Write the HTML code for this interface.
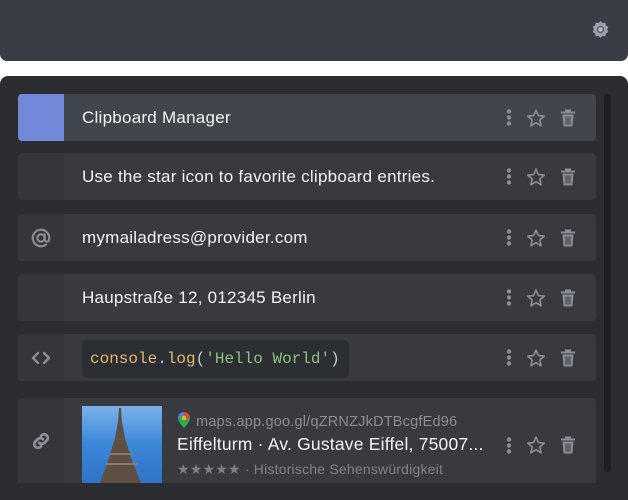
<!DOCTYPE html>
<html><head><style>
*{margin:0;padding:0;box-sizing:border-box}
body{width:628px;height:500px;background:#fff;font-family:"Liberation Sans",sans-serif;overflow:hidden;position:relative}
.top{position:absolute;left:0;top:0;width:628px;height:61px;background:#3a3d45;border-radius:0 0 7px 7px}
.panel{position:absolute;left:0;top:76px;width:628px;height:424px;background:#2b2d31;border-radius:8px 8px 0 0}
.row{position:absolute;left:18px;width:578px;height:47px;background:#383a40;border-radius:4px;overflow:hidden}
.row .ic{position:absolute;left:0;top:0;width:46px;height:100%;background:#34363c;display:flex;align-items:center;justify-content:center;color:#8a8d93}
.row .t{position:absolute;left:64px;top:0;height:47px;line-height:47px;color:#f2f3f5;font-size:17px;letter-spacing:0.25px}
.acts{position:absolute;right:20px;top:50%;transform:translateY(-50%);display:flex;align-items:center;gap:14px}
.sb{position:absolute;left:604px;top:94px;width:7px;height:378px;background:#1e1f22;border-radius:3px}
</style></head><body>
<div class="top">
<svg style="position:absolute;left:591px;top:20px" width="19" height="19" viewBox="0 0 20 20"><path fill="#9aa3ad" d="M10 1l2 2.2 3-.4.6 2.9 2.6 1.5-1.2 2.8 1.2 2.8-2.6 1.5-.6 2.9-3-.4L10 19l-2-2.2-3 .4-.6-2.9L1.8 12.8 3 10 1.8 7.2l2.6-1.5.6-2.9 3 .4z"/><circle cx="10" cy="10" r="4" fill="#5d6670"/><circle cx="10" cy="10" r="2.3" fill="#b8c0c8"/></svg>
</div>
<div class="panel"></div>
<div class="sb"></div>

<div class="row" style="top:94px;background:#41454c"><div class="ic" style="background:#7289da"></div><div class="t">Clipboard Manager</div><div class="acts"></div></div>
<div class="row" style="top:153px"><div class="ic"></div><div class="t">Use the star icon to favorite clipboard entries.</div><div class="acts"></div></div>
<div class="row" style="top:214px"><div class="ic"><svg width="22" height="22" viewBox="0 0 24 24" fill="none" stroke="#8a8d93" stroke-width="2.4" stroke-linecap="round"><circle cx="12" cy="12" r="4"/><path d="M16 8v5.5a2.5 2.5 0 0 0 5 0V12a9 9 0 1 0-3.5 7.1"/></svg></div><div class="t">mymailadress@provider.com</div><div class="acts"></div></div>
<div class="row" style="top:274px"><div class="ic"></div><div class="t">Haupstraße 12, 012345 Berlin</div><div class="acts"></div></div>
<div class="row" style="top:334px"><div class="ic"><svg width="20" height="16" viewBox="0 0 20 16" fill="none" stroke="#8a8d93" stroke-width="2.4" stroke-linecap="round" stroke-linejoin="round"><path d="M7 3L2 8l5 5M13 3l5 5-5 5"/></svg></div>
<div style="position:absolute;left:64px;top:6px;width:267px;height:38px;background:#2b2e33;border-radius:5px;font-family:'Liberation Mono',monospace;font-size:16px;line-height:38px;padding-left:8px;color:#e8b66b">console<span style="color:#c8ccd2">.</span>log<span style="color:#c8ccd2">(</span><span style="color:#8ec07c">'Hello World'</span><span style="color:#c8ccd2">)</span></div><div class="acts"></div></div>
<div class="row" style="top:398px;height:85px;border-radius:4px 4px 0 0"><div class="ic"><svg width="22" height="22" viewBox="0 0 24 24" fill="none" stroke="#8a8d93" stroke-width="3" stroke-linecap="round"><path d="M10 14a4 4 0 0 0 5.6 0l3-3a4 4 0 0 0-5.6-5.6l-1 1"/><path d="M14 10a4 4 0 0 0-5.6 0l-3 3a4 4 0 0 0 5.6 5.6l1-1"/></svg></div>
<div style="position:absolute;left:64px;top:8px;width:80px;height:77px;background:linear-gradient(#7ab2ea,#3b86d8 50%,#2f74c8)"><svg width="80" height="77" viewBox="0 0 80 77"><path d="M37 2h2l1 14 3 16 6 20 10 25H18l9-25 6-20 3-16z" fill="#5e4f42"/><path d="M24 58h32M28 48h24" stroke="#8a7a68" stroke-width="2"/></svg></div>
<div style="position:absolute;left:160px;top:14px;font-size:14.5px;color:#8a8d93;letter-spacing:0.2px"><svg width="12" height="16" viewBox="0 0 12 16" style="vertical-align:-2px;margin-right:6px"><path d="M6 0a6 6 0 0 1 6 6c0 4-6 10-6 10S0 10 0 6a6 6 0 0 1 6-6z" fill="#34a853"/><path d="M6 0a6 6 0 0 1 6 6H6z" fill="#ea4335"/><path d="M0 6a6 6 0 0 1 6-6v6z" fill="#4285f4"/><circle cx="6" cy="6" r="2.2" fill="#fbbc05"/></svg>maps.app.goo.gl/qZRNZJkDTBcgfEd96</div>
<div style="position:absolute;left:159px;top:36px;font-size:17.5px;color:#f2f3f5;letter-spacing:0.2px">Eiffelturm · Av. Gustave Eiffel, 75007...</div>
<div style="position:absolute;left:159px;top:63px;font-size:14px;color:#7e8288;letter-spacing:0.2px">★★★★★ · Historische Sehenswürdigkeit</div>
<div class="acts" style="top:47px"></div></div>

<script>
var a='<svg width="6" height="18" viewBox="0 0 6 18"><circle cx="3" cy="3" r="2.2" fill="#8a8d93"/><circle cx="3" cy="9" r="2.2" fill="#8a8d93"/><circle cx="3" cy="15" r="2.2" fill="#8a8d93"/></svg><svg width="20" height="19" viewBox="0 0 24 23"><path d="M12 2l2.9 6.6 7.1.6-5.4 4.7 1.6 7-6.2-3.7-6.2 3.7 1.6-7L2 9.2l7.1-.6z" fill="none" stroke="#8a8d93" stroke-width="2" stroke-linejoin="round"/></svg><svg width="16" height="19" viewBox="0 0 16 19"><path d="M5 1h6v2h4v2H1V3h4z" fill="#8a8d93"/><path d="M2.5 6h11l-1 12h-9z" fill="#8a8d93"/><path d="M6 8v8M8 8v8M10 8v8" stroke="#383a40" stroke-width="1"/></svg>';
document.querySelectorAll('.acts').forEach(function(e){e.innerHTML=a});
</script>
</body></html>
